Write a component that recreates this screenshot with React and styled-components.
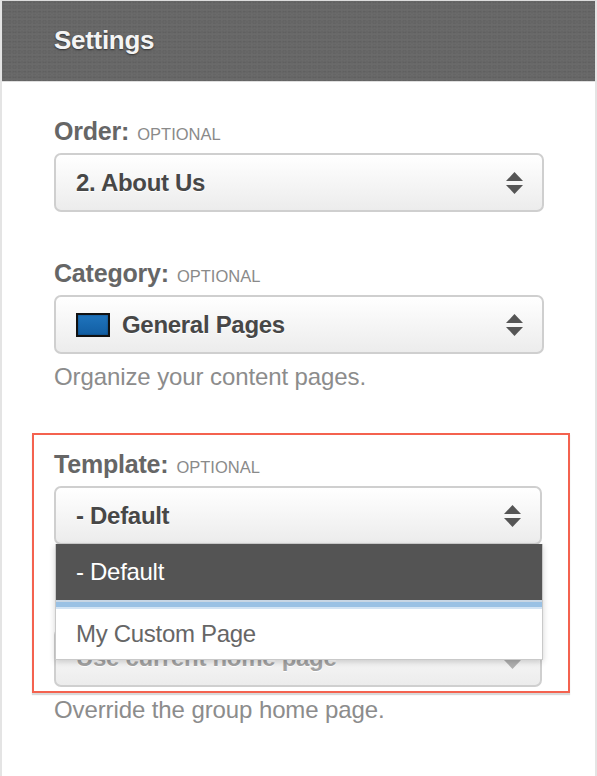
import React from "react";
import styled, { createGlobalStyle } from "styled-components";

const Global = createGlobalStyle`
  html, body { margin: 0; padding: 0; background: #fff; }
  body { font-family: "Liberation Sans", Arial, Helvetica, sans-serif; }
  * { box-sizing: border-box; }
`;

const Panel = styled.div`
  width: 597px;
  min-height: 776px;
  background: #fff;
  border-top: 1px solid #dcdcdc;
  border-left: 2px solid #e4e4e4;
  border-right: 2px solid #e4e4e4;
`;

const Header = styled.header`
  height: 81px;
  display: flex;
  align-items: center;
  padding-left: 52px;
  background-color: #656565;
  background-image: radial-gradient(rgba(0, 0, 0, 0.05) 1px, transparent 1.5px),
    radial-gradient(rgba(255, 255, 255, 0.03) 1px, transparent 1.5px);
  background-size: 5px 3px, 3px 5px;
  background-position: 0 0, 2px 1px;
  border-bottom: 1px solid #dedede;
`;

const Title = styled.h2`
  margin: 0 0 1px;
  font-size: 26px;
  font-weight: 700;
  color: #f4f4f4;
  letter-spacing: -0.3px;
  text-shadow: 0 1px 2px rgba(0, 0, 0, 0.55);
`;

const Content = styled.div`
  padding: 35px 51px 0 52px;
  display: flex;
  flex-direction: column;
`;

const Field = styled.div`
  margin-top: ${(p) => p.$gap || 0}px;
  display: flex;
  flex-direction: column;
`;

const Label = styled.label`
  display: block;
  height: 28px;
  font-size: 25px;
  line-height: 28px;
  font-weight: 700;
  color: #666;
  margin-bottom: 8px;
  letter-spacing: -0.2px;
`;

const Optional = styled.span`
  font-size: 16.5px;
  line-height: 1;
  font-weight: 400;
  color: #8a8a8a;
  text-transform: uppercase;
  margin-left: 8px;
  letter-spacing: 0;
`;

const SelectWrap = styled.div`
  position: relative;
`;

const SelectBox = styled.div`
  height: 59px;
  display: flex;
  align-items: center;
  padding: 0 19px 0 20px;
  border: 2px solid #cfcfcf;
  border-radius: 7px;
  background: linear-gradient(#ffffff, #ececec);
  color: ${(p) => (p.$faded ? "#a3a3a3" : "#474747")};
  font-size: 24px;
  font-weight: 700;
  letter-spacing: -0.3px;
  text-shadow: 0 1px 0 #fff;
`;

const Value = styled.span`
  flex: 1;
  display: flex;
  align-items: center;
  gap: 12px;
  white-space: nowrap;
`;

const Swatch = styled.span`
  width: 34px;
  height: 24px;
  border: 2px solid #111;
  background: linear-gradient(#1f74bd, #125ea3);
  box-shadow: inset 0 0 2px rgba(0, 0, 0, 0.4);
`;

const Help = styled.p`
  margin: ${(p) => p.$top || 9}px 0 0;
  font-size: 24px;
  line-height: 28px;
  color: #8c8c8c;
  letter-spacing: -0.1px;
`;

const Highlight = styled.section`
  margin: 42px -26px 0 -22px;
  padding: 15px 26px 4px 20px;
  border: 2px solid #f4624f;
  box-shadow: 0 2px 1px rgba(0, 0, 0, 0.15);
`;

const Menu = styled.ul`
  position: absolute;
  top: calc(100% - 1px);
  left: 1px;
  right: -1px;
  margin: 0;
  padding: 0;
  list-style: none;
  background: #fff;
  border: 1px solid #c9c9c9;
  border-top: none;
  box-shadow: 0 2px 6px rgba(0, 0, 0, 0.18);
  z-index: 2;
`;

const Option = styled.li`
  height: ${(p) => (p.$active ? 56 : 50)}px;
  display: flex;
  align-items: center;
  padding-left: 20px;
  font-size: 24px;
  letter-spacing: -0.3px;
  color: ${(p) => (p.$active ? "#fff" : "#666")};
  background: ${(p) => (p.$active ? "#545454" : "#fff")};
`;

const Divider = styled.li`
  height: 9px;
  background: linear-gradient(
    #c8d6e4 0,
    #c8d6e4 2px,
    #9ac1e4 2px,
    #9ac1e4 7px,
    #d3e4f4 7px
  );
`;

const Arrows = ({ faded }) => (
  <svg width="17" height="22" viewBox="0 0 17 22" aria-hidden="true">
    <g fill={faded ? "#b0b0b0" : "#555"}>
      <polygon points="8.5,0 17,9 0,9" />
      <polygon points="0,13 17,13 8.5,22" />
    </g>
  </svg>
);

const Select = ({ children, faded }) => (
  <SelectBox $faded={faded}>
    <Value>{children}</Value>
    <Arrows faded={faded} />
  </SelectBox>
);

export default function App() {
  return (
    <>
      <Global />
      <Panel>
        <Header>
          <Title>Settings</Title>
        </Header>
        <Content>
          <Field>
            <Label>
              Order:<Optional>Optional</Optional>
            </Label>
            <Select>2. About Us</Select>
          </Field>

          <Field $gap={47}>
            <Label>
              Category:<Optional>Optional</Optional>
            </Label>
            <Select>
              <Swatch />
              General Pages
            </Select>
            <Help>Organize your content pages.</Help>
          </Field>

          <Highlight>
            <Field>
              <Label>
                Template:<Optional>Optional</Optional>
              </Label>
              <SelectWrap>
                <Select>- Default</Select>
                <Menu>
                  <Option $active>- Default</Option>
                  <Divider />
                  <Option>My Custom Page</Option>
                </Menu>
              </SelectWrap>
            </Field>
            <Field $gap={47}>
              <Label>
                Home Page:<Optional>Optional</Optional>
              </Label>
              <Select faded>Use current home page</Select>
            </Field>
          </Highlight>
          <Help $top={3}>Override the group home page.</Help>
        </Content>
      </Panel>
    </>
  );
}
